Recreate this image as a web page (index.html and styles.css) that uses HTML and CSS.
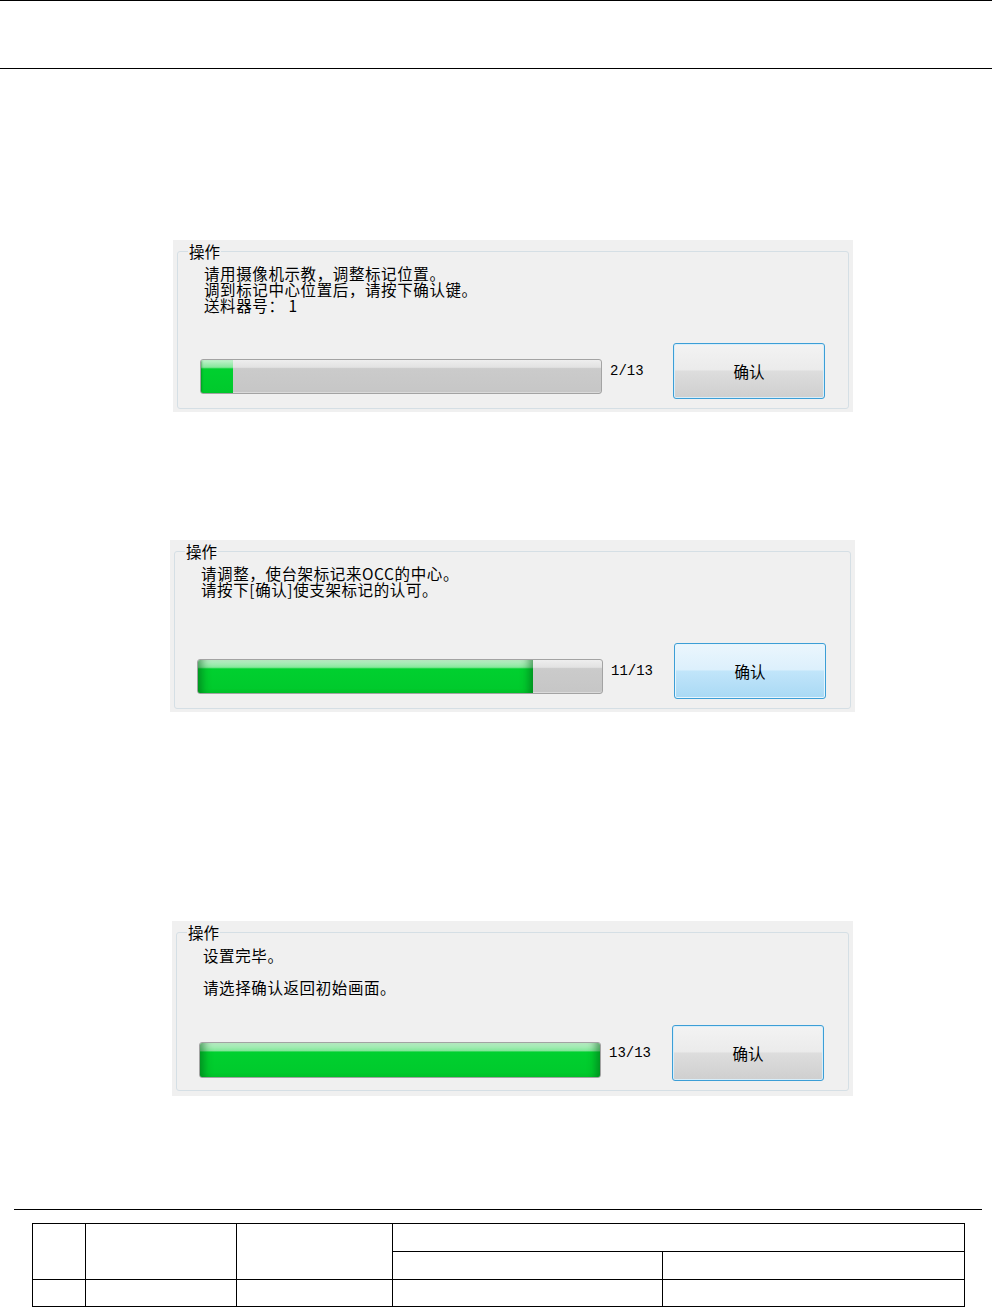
FILE: index.html
```html
<!DOCTYPE html>
<html lang="zh-CN">
<head>
  <meta charset="utf-8">
  <title>操作 – 标记位置调整</title>
  <link rel="stylesheet" href="styles.css">
</head>
<body>

<!-- ───────── page header rule ───────── -->
<header class="page-head"></header>

<!-- ───────── step 2/13 ───────── -->
<section class="panel panel-first">
  <fieldset class="group">
    <legend>操作</legend>
    <div class="msg">
      <div>请用摄像机示教，调整标记位置。</div>
      <div>调到标记中心位置后，请按下确认键。</div>
      <div>送料器号：&nbsp;1</div>
    </div>
    <div class="row">
      <div class="bar"><div class="fill short" style="width:8%"></div></div>
      <span class="count">2/13</span>
      <button class="ok">确认</button>
    </div>
  </fieldset>
</section>

<!-- ───────── step 11/13 ───────── -->
<section class="panel panel-second">
  <fieldset class="group">
    <legend>操作</legend>
    <div class="msg">
      <div>请调整，使台架标记来OCC的中心。</div>
      <div>请按下[确认]使支架标记的认可。</div>
    </div>
    <div class="row">
      <div class="bar"><div class="fill" style="width:83%"></div></div>
      <span class="count">11/13</span>
      <button class="ok hover">确认</button>
    </div>
  </fieldset>
</section>

<!-- ───────── step 13/13 ───────── -->
<section class="panel panel-third">
  <fieldset class="group">
    <legend>操作</legend>
    <div class="msg">
      <p>设置完毕。</p>
      <p>请选择确认返回初始画面。</p>
    </div>
    <div class="row">
      <div class="bar"><div class="fill" style="width:100%"></div></div>
      <span class="count">13/13</span>
      <button class="ok">确认</button>
    </div>
  </fieldset>
</section>

<!-- ───────── page footer ───────── -->
<footer class="page-foot">
  <table class="sign">
    <tr>
      <td class="c1" rowspan="2"></td>
      <td class="c2" rowspan="2"></td>
      <td class="c3" rowspan="2"></td>
      <td colspan="2"></td>
    </tr>
    <tr>
      <td class="c4"></td>
      <td class="c5"></td>
    </tr>
    <tr class="last">
      <td></td><td></td><td></td><td></td><td></td>
    </tr>
  </table>
</footer>

</body>
</html>
```

FILE: styles.css
```css
:root  {font-family: "Noto Sans CJK SC", "Noto Sans", sans-serif;}
body   {margin:0;background:#fff;color:#000;width:997px}

/* header / footer rules */
.page-head {width:992px;height:67px;border-top:1px solid #000;border-bottom:1px solid #000}
.page-foot {margin:113px 0 0 14px;width:968px;border-top:1px solid #000;padding-top:13px}

/* dialog panels */
.panel {width:680px;margin-left:173px;background:#f0f0f0;
        padding:3px 4px 3px 4px;box-sizing:border-box}
.panel-first  {margin-top:171px}
.panel-second {margin-top:128px;margin-left:170px;width:685px}
.panel-third  {margin-top:209px;margin-left:172px;width:681px;padding-bottom:5px}
.panel-third .msg {margin-top:6px}

.group {margin:0;padding:0 10px 9px 10px;border:1px solid #d5dfe5;border-radius:3px}
.group legend {padding:0 1px;font-size:15.5px;line-height:17px}

.msg   {height:78px;margin:5px 0 0 16px;font-size:15.5px;line-height:16px;letter-spacing:.6px}
.msg p {margin:0 0 16px}

.row   {display:flex;align-items:center;height:56px;margin-left:12px}
.bar   {width:400px;height:33px;margin-top:11px;border:1px solid #a3a3a3;border-radius:3px;
        background:linear-gradient(#eeeeee,#e2e2e2 22%,#cbcbcb 26%,#c6c6c6);
        overflow:hidden;box-shadow:inset 0 -1px 0 #dadada}
.panel-second .bar {width:404px}
.panel-third .bar  {height:34px;margin-top:13px}
.fill  {height:100%;
        background:linear-gradient(#c2f3cd,#86e79c 22%,#00d02f 27%,#00c92c);
        box-shadow:inset 10px 0 8px -6px rgba(0,90,20,.55),inset -10px 0 8px -6px rgba(0,90,20,.55)}
.fill.short {box-shadow:inset 2px 0 2px -1px rgba(0,90,20,.4)}
.count {width:71px;padding-left:8px;box-sizing:border-box;
        font:14px "Liberation Mono", monospace}

/* Windows-7 style default button */
.ok    {width:152px;height:56px;padding:0;border:1px solid #3c9ed6;border-radius:3px;
        font:15.5px "Noto Sans CJK SC", sans-serif;color:#000;
        background:linear-gradient(#f3f3f3,#ebebeb 48%,#dddddd 50%,#cfcfcf);
        box-shadow:inset 0 0 0 1px #d8eefa}
.ok.hover {background:linear-gradient(#ebf6fd,#dcf0fc 48%,#c1e5fa 50%,#a9d9f4);
           box-shadow:inset 0 0 0 1px #e6f5fd}

/* signature table */
.sign    {margin-left:18px;width:933px;border-collapse:collapse}
.sign td {border:1px solid #000;height:27px;padding:0}
.sign .c1 {width:52px}
.sign .c2 {width:150px}
.sign .c3 {width:155px}
.sign .c4 {width:269px}
.sign tr.last td {height:26px}
```
